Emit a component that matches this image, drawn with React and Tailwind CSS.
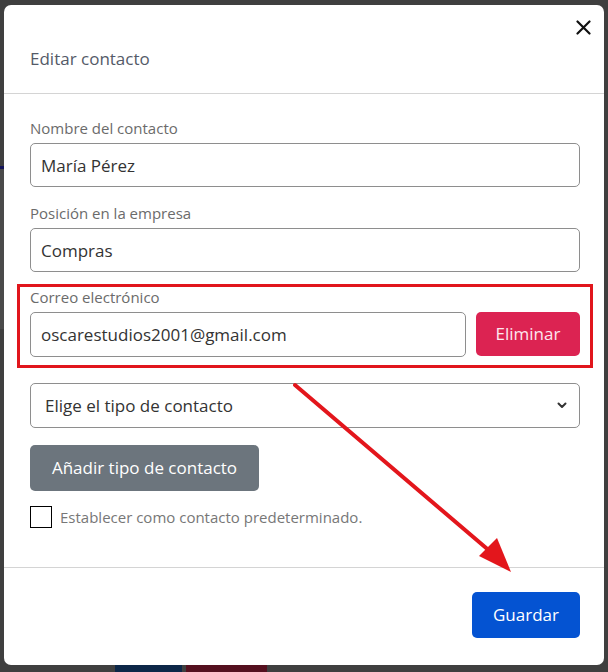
import React from "react"

const font = { fontFamily: '"Open Sans", "Liberation Sans", sans-serif' }

const Field = ({ label, value }) => (
  <div className="flex flex-col">
    <label className="text-[15px] leading-5 text-[#6b6b6b]">{label}</label>
    <input
      readOnly
      value={value}
      className="mt-[5px] h-[44px] w-full rounded-[5px] border border-[#8e8e8e] bg-white px-[10px] text-[17px] text-[#333] outline-none"
    />
  </div>
)

export default function App() {
  return (
    <div className="relative h-[672px] w-[608px] overflow-hidden bg-[#3f3f3f]" style={font}>
      {/* what sits behind the dialog */}
      <div className="flex h-full flex-col">
        <div className="h-[166px]" />
        <div className="h-[3px] w-[8px] bg-[#14145a]" />
        <div className="h-[160px] w-[8px] bg-[#4a4a4a]" />
        <div className="flex-1" />
        <div className="flex h-[8px] gap-[4px] pl-[115px]">
          <div className="w-[67px] bg-[#0d2748]" />
          <div className="w-[81px] bg-[#55101f]" />
        </div>
      </div>

      {/* dialog */}
      <div className="absolute left-[4px] top-[5px] flex h-[660px] w-[600px] flex-col rounded-[7px] bg-white">
        <div className="flex flex-col border-b border-[#d4d4d4] pb-[22px] pl-[26px] pr-[24px] pt-[8px]">
          <div className="flex h-[28px] items-center justify-end">
            <button className="-mr-[17px] flex h-[28px] w-[28px] items-center justify-center">
              <svg width="15" height="15" viewBox="0 0 15 15">
                <path d="M1.5 1.5 L13.5 13.5 M13.5 1.5 L1.5 13.5" stroke="#111" strokeWidth="2.2" strokeLinecap="round" />
              </svg>
            </button>
          </div>
          <h2 className="mt-[6px] text-[17px] leading-6 text-[#545a68]">Editar contacto</h2>
        </div>

        <div className="flex flex-col pl-[26px] pr-[24px] pt-[24px]">
          <Field label="Nombre del contacto" value="María Pérez" />
          <div className="h-[16px]" />
          <Field label="Posición en la empresa" value="Compras" />

          <div className="-ml-[13px] -mr-[13px] mt-[12px] border-[3px] border-[#e1161c] pb-[8px] pl-[10px] pr-[10px] pt-[2px]">
            <label className="block text-[15px] leading-4 text-[#6b6b6b]">Correo electrónico</label>
            <div className="mt-[7px] flex gap-[10px]">
              <input
                readOnly
                value="oscarestudios2001@gmail.com"
                className="h-[45px] flex-1 rounded-[5px] border border-[#8e8e8e] bg-white px-[10px] text-[17px] text-[#333] outline-none"
              />
              <button className="h-[44px] w-[104px] rounded-[5px] bg-[#dc2352] text-[17px] text-[#fde7ee]">Eliminar</button>
            </div>
          </div>

          <div className="mt-[15px] flex h-[45px] items-center justify-between rounded-[5px] border border-[#8e8e8e] px-[14px] text-[17px] text-[#333]">
            <span>Elige el tipo de contacto</span>
            <svg width="10" height="7" viewBox="0 0 10 7" className="-mr-[2px]">
              <path d="M1.5 1.5 L5 5 L8.5 1.5" fill="none" stroke="#333" strokeWidth="2" strokeLinecap="round" strokeLinejoin="round" />
            </svg>
          </div>

          <button className="mt-[17px] h-[46px] w-[229px] rounded-[5px] bg-[#6c757d] text-[17px] text-white">
            Añadir tipo de contacto
          </button>

          <label className="mt-[15px] flex items-center gap-[8px]">
            <span className="h-[22px] w-[22px] border-[1.5px] border-black bg-white" />
            <span className="text-[15px] text-[#777]">Establecer como contacto predeterminado.</span>
          </label>
        </div>

        <div className="mt-[38px] flex flex-1 items-start justify-end border-t border-[#d4d4d4] pr-[24px] pt-[24px]">
          <button className="h-[46px] w-[108px] rounded-[5px] bg-[#0453d2] text-[17px] text-white">Guardar</button>
        </div>
      </div>

      {/* annotation arrow */}
      <svg className="pointer-events-none absolute left-0 top-0" width="608" height="672">
        <line x1="295" y1="385" x2="492" y2="553" stroke="#e3161c" strokeWidth="4" strokeLinecap="round" />
        <polygon points="511,572 479,556 497,538" fill="#e3161c" />
      </svg>
    </div>
  )
}
